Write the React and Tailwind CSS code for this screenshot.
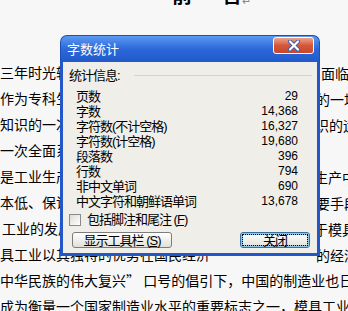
const lines = [
  { left: '三年时光转瞬即逝，在即将毕业之际，我们面临着人生', right: '面临着', rx: 321 },
  { left: '作为专科生的最后一次学习机会，毕业设计是一次对', right: '的一场', rx: 316 },
  { left: '知识的一次综合运用，是对我们三年所学专业知识的运', right: '识的运', rx: 315 },
  { left: '一次全面系统的检验和总结。', right: '', rx: 321 },
  { left: '是工业生产的基础工艺装备，在现代工业生产中', right: '生产中', rx: 314 },
  { left: '本低、保证质量的重要手段，', right: '要手段', rx: 316 },
  { left: '工业的发展水平取决于模具', right: '于模具', rx: 314, pl: 'pl-[2px]' },
  { left: '具工业以其独特的优势在国民经济', right: '的经济', rx: 316 },
];

const stats = [
  ['页数', '29'],
  ['字数', '14,368'],
  ['字符数(不计空格)', '16,327'],
  ['字符数(计空格)', '19,680'],
  ['段落数', '396'],
  ['行数', '794'],
  ['非中文单词', '690'],
  ['中文字符和朝鲜语单词', '13,678'],
];

const cjk = { fontFamily: '"Noto Sans CJK SC", sans-serif' };
const ui = { fontFamily: '"Liberation Sans", "Noto Sans CJK SC", sans-serif' };

function CloseX() {
  return (
    <svg width="14" height="11" viewBox="0 0 14 11">
      <path d="M3 1.5 L11 9.5 M11 1.5 L3 9.5" stroke="#3a5aa8" strokeWidth="4" strokeLinecap="round" />
      <path d="M3 1.5 L11 9.5 M11 1.5 L3 9.5" stroke="#ffffff" strokeWidth="2.2" strokeLinecap="round" />
    </svg>
  );
}

export default function App() {
  return (
    <div className="relative w-[348px] h-[311px] overflow-hidden bg-[#f7f7f7] text-black" style={cjk}>
      {/* heading, mostly scrolled off the top */}
      <div className="flex items-end h-[24px] mt-[-17px] pl-[172px] gap-[30px] text-[20px] leading-[24px] font-bold">
        <span>前</span>
        <span className="flex items-end">
          言<span className="text-[11px] leading-[14px] font-normal text-[#888]">↵</span>
        </span>
      </div>

      <div className="mt-[52px] flex flex-col text-[14px]">
        {lines.map((l, i) => (
          <div key={i} className={`relative flex items-center h-[26px] whitespace-nowrap ${l.pl || ''}`}>
            <span className="w-[300px] shrink-0 overflow-hidden">{l.left}</span>
            {l.right && (
              <span className="absolute top-[4px]" style={{ left: l.rx }}>
                {l.right}
              </span>
            )}
          </div>
        ))}
        <div className="flex items-center h-[26px] whitespace-nowrap">中华民族的伟大复兴” 口号的倡引下，中国的制造业也日</div>
        <div className="flex items-center h-[26px] whitespace-nowrap">成为衡量一个国家制造业水平的重要标志之一，模具工业</div>
      </div>

      {/* dialog */}
      <div className="absolute left-[60px] top-[35px] w-[260px] h-[221px] flex flex-col" style={ui}>
        <div className="relative h-[27px] shrink-0 rounded-t-[7px] border border-b-0 border-[#1c4fb8] bg-gradient-to-b from-[#5d9af2] via-[#2c68d9] to-[#2159cb] flex items-center pl-[6px]">
          <span className="text-white text-[13px]" style={cjk}>字数统计</span>
          <div className="absolute right-[5px] top-[1px] w-[41px] h-[17px] rounded-[3px] border border-white bg-gradient-to-b from-[#eea187] via-[#d5573a] to-[#c5482b] flex items-center justify-center">
            <CloseX />
          </div>
        </div>

        <div className="flex-1 flex flex-col border-x-[3px] border-b-[3px] border-[#2357c9] bg-[#efeee8] text-[13px] tracking-[-1px] leading-[15px]">
          <div className="flex items-center mt-[6px] pl-[6px] pr-[5px] h-[15px]">
            <span>统计信息:</span>
            <div className="flex-1 ml-[14px] h-px bg-[#d4d3cb]" />
          </div>

          <div className="mt-[6px] pl-[13px] pr-[19px] flex flex-col">
            {stats.map(([k, v]) => (
              <div key={k} className="flex items-center justify-between h-[15px]">
                <span>{k}</span>
                <span className="text-[12px] tracking-normal">{v}</span>
              </div>
            ))}
          </div>

          <div className="mt-[3px] pl-[6px] flex items-center gap-[6px] h-[15px]">
            <div className="w-[12px] h-[12px] border border-[#8a8a8a] bg-gradient-to-br from-[#dcdcd6] to-white" />
            <span>
              包括脚注和尾注 (<span className="underline">F</span>)
            </span>
          </div>

          <div className="mt-[5px] pl-[9px] pr-[7px] flex items-center justify-between">
            <div className="w-[100px] h-[16px] rounded-[3px] border border-[#7c7c7c] bg-gradient-to-b from-white to-[#e2e0d8] flex items-center justify-center">
              显示工具栏 (<span className="underline">S</span>)
            </div>
            <div className="w-[70px] h-[16px] rounded-[3px] border border-[#3c6f9c] bg-gradient-to-b from-white to-[#e2e0d8] p-[1px] shadow-[inset_0_0_0_2px_#8ec6e6]">
              <div className="w-full h-full border border-dotted border-black flex items-center justify-center">
                关闭
              </div>
            </div>
          </div>
        </div>
      </div>
    </div>
  );
}
